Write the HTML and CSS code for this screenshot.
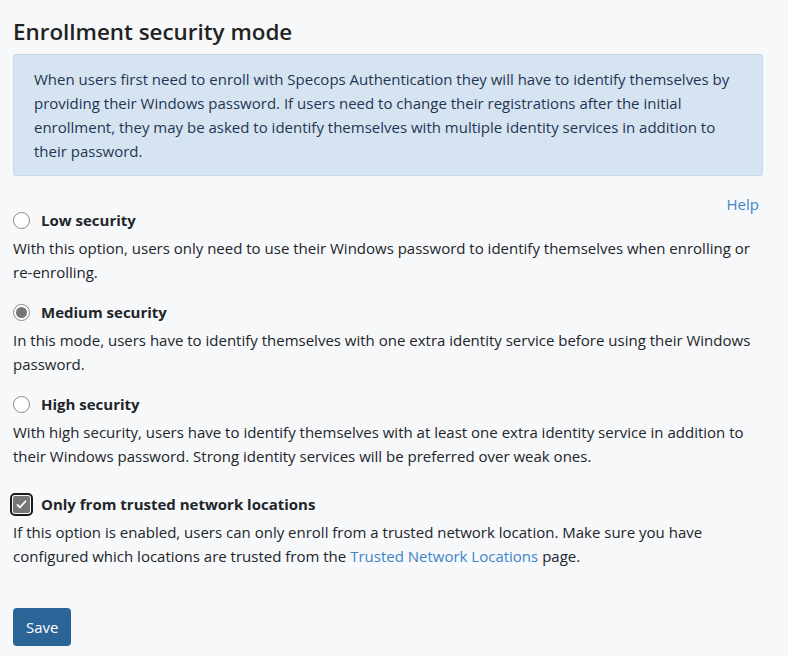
FILE: index.html
```html
<!DOCTYPE html>
<html>
<head>
<meta charset="utf-8">
<link rel="stylesheet" href="styles.css">
</head>
<body>
<div class="page">
  <h2 class="title">Enrollment security mode</h2>
  <div class="alert">When users first need to enroll with Specops Authentication they will have to identify themselves by providing their Windows password. If users need to change their registrations after the initial enrollment, they may be asked to identify themselves with multiple identity services in addition to their password.</div>
  <div class="help-row"><a class="link" href="#">Help</a></div>
  <div class="option first">
    <label class="opt-label"><span class="radio"></span>Low security</label>
    <p class="desc">With this option, users only need to use their Windows password to identify themselves when enrolling or re-enrolling.</p>
  </div>
  <div class="option">
    <label class="opt-label"><span class="radio checked"></span>Medium security</label>
    <p class="desc">In this mode, users have to identify themselves with one extra identity service before using their Windows password.</p>
  </div>
  <div class="option">
    <label class="opt-label"><span class="radio"></span>High security</label>
    <p class="desc">With high security, users have to identify themselves with at least one extra identity service in addition to their Windows password. Strong identity services will be preferred over weak ones.</p>
  </div>
  <div class="option trusted">
    <label class="opt-label"><span class="check"><svg viewBox="0 0 16 16" width="13" height="13"><path d="M3 8.5l3 3 7-7.5" fill="none" stroke="#fff" stroke-width="2.2" stroke-linecap="round" stroke-linejoin="round"/></svg></span>Only from trusted network locations</label>
    <p class="desc">If this option is enabled, users can only enroll from a trusted network location. Make sure you have configured which locations are trusted from the <a class="link" href="#">Trusted Network Locations</a> page.</p>
  </div>
  <button class="btn">Save</button>
</div>
</body>
</html>
```

FILE: styles.css
```css
html, body {
  margin: 0;
  padding: 0;
  background: #f7f8fa;
}
body {
  font-family: "Open Sans", "Noto Sans", sans-serif;
  font-size: 15px;
  line-height: 24px;
  color: #212529;
}
.page {
  padding: 15px 25px 0 13px;
}
.title {
  margin: 0 0 5px 0;
  font-size: 22.4px;
  font-weight: 600;
  line-height: 34px;
  color: #222;
}
.alert {
  background: #d6e4f2;
  border: 1px solid #c6d8ec;
  border-radius: 3px;
  color: #1f3652;
  padding: 12px 20px 12px 20px;
}
.help-row {
  display: flex;
  justify-content: flex-end;
  padding-right: 4px;
  margin-top: 16px;
  height: 24px;
}
.link {
  color: #3c85c8;
  text-decoration: none;
}
.option {
  margin-bottom: 16px;
}
.option.first {
  margin-top: -8px;
}
.option.trusted {
  margin-top: 24px;
}
.opt-label {
  display: flex;
  align-items: center;
  font-weight: 700;
  height: 24px;
  gap: 11px;
}
.radio {
  width: 15px;
  height: 15px;
  border: 1px solid #8a8a8a;
  border-radius: 50%;
  background: #fff;
  display: inline-flex;
  align-items: center;
  justify-content: center;
  flex: none;
}
.radio.checked::after {
  content: "";
  width: 11px;
  height: 11px;
  border-radius: 50%;
  background: #767676;
}
.check {
  width: 17px;
  height: 17px;
  background: #767676;
  border-radius: 2px;
  outline: 2px solid #1a1a1a;
  outline-offset: 1px;
  display: inline-flex;
  align-items: center;
  justify-content: center;
  flex: none;
}
.desc {
  margin: 4px 0 0 0;
}
.btn {
  margin-top: 24px;
  background: #2b6496;
  color: #fff;
  border: none;
  border-radius: 4px;
  font-family: inherit;
  font-size: 15px;
  height: 38px;
  padding: 0 13px;
}
```
